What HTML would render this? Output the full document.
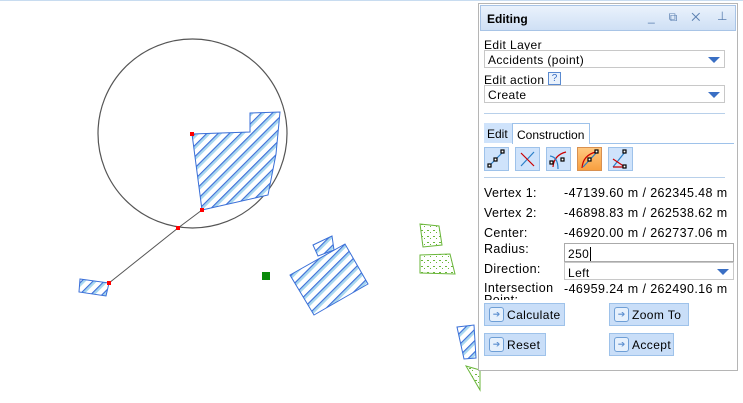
<!DOCTYPE html><html><head><style>
body{margin:0;width:743px;height:403px;overflow:hidden;background:#fff;font-family:"Liberation Sans",sans-serif;font-size:12px;letter-spacing:.4px;color:#000;position:relative}
.a{position:absolute}
.sel{position:absolute;background:#fff;border:1px solid #c8c8c8;box-sizing:border-box;padding:2px 0 0 3px;font-size:12px}
.dd:after{content:"";position:absolute;right:4px;top:6px;border-left:6px solid transparent;border-right:6px solid transparent;border-top:6px solid #3a6fc4}
.tb{position:absolute;top:147px;width:25px;height:24px;background:#cfe3fb;border:1px solid #9ec2ea;box-sizing:border-box}
.btn{position:absolute;height:23px;background:#c9def8;border:1px solid #9ec2ea;box-sizing:border-box;font-size:12px;padding:4px 0 0 22px}
.btn:before{content:"➔";position:absolute;left:4px;top:3px;width:13px;height:13px;border:1px solid #6f9fd6;border-radius:3px;background:#e6f0fc;color:#5c8fd0;font-size:9px;line-height:13px;text-align:center;letter-spacing:0}
.v{font-size:12.5px}
</style></head><body>
<svg class="a" style="left:0;top:0" width="743" height="403">
<defs><pattern id="h" width="8" height="8" patternUnits="userSpaceOnUse" patternTransform="rotate(45)"><rect width="8" height="8" fill="#fff"/><rect width="1.3" height="8" fill="#3a6fd8"/><rect x="1.3" width="2.2" height="8" fill="#a8d8f0"/></pattern>
<pattern id="g" width="6" height="6" patternUnits="userSpaceOnUse"><rect width="6" height="6" fill="#fff"/><rect x="1" y="2" width="2" height="1" fill="#6ab63a"/><rect x="4" y="4" width="1" height="1" fill="#6ab63a"/></pattern></defs>
<line x1="0" y1="0.5" x2="743" y2="0.5" stroke="#c8dcf0"/>
<circle cx="192.5" cy="133.5" r="94.5" fill="none" stroke="#555" stroke-width="1.2"/>
<g stroke="#3a6fd8" stroke-width="1" fill="url(#h)">
<polygon points="192,134 250,132 250,113 280,112 276,154 268,195 202,210"/>
<polygon points="80,279 109,283 106,296 79,292"/>
<polygon points="313,245 332,236 334,250 318,256"/>
<polygon points="290,275 345,244 368,284 314,315"/>
<polygon points="457,327 474,325 476,358 464,359"/></g>
<g stroke="#6ab63a" fill="url(#g)"><polygon points="420,224 439,226 442,245 423,247"/><polygon points="420,255 450,254 455,274 420,273"/><polygon points="466,366 480,370 480,390"/></g>
<polyline points="109,283 178,228 202,210" fill="none" stroke="#555"/>
<g fill="#f00"><rect x="190" y="132" width="4" height="4"/><rect x="200" y="208" width="4" height="4"/><rect x="176" y="226" width="4" height="4"/><rect x="107" y="281" width="4" height="4"/></g>
<rect x="262" y="272" width="8" height="8" fill="#0a8a0a"/>
</svg>
<div class="a" style="left:478px;top:3px;width:260px;height:368px;border:1px solid #b5b5b5;background:#fff;box-sizing:border-box"></div>
<div class="a" style="left:480px;top:5px;width:256px;height:26px;background:linear-gradient(#eaf2fc,#cfe0f5);border:1px solid #a8c4e6;box-sizing:border-box;font-weight:bold;font-size:12px;letter-spacing:0;padding:6px 0 0 6px">Editing
<span class="a" style="left:167px;top:4px;color:#5a7fb0;font-weight:normal;letter-spacing:14px">_⧉✕</span><span class="a" style="left:236px;top:3px;color:#5a7fb0;font-weight:normal">⊥</span></div>
<div class="a" style="left:484px;top:38px">Edit Layer</div>
<div class="sel dd" style="left:484px;top:50px;width:241px;height:18px">Accidents (point)</div>
<div class="a" style="left:484px;top:73px">Edit action</div>
<div class="a" style="left:548px;top:72px;width:11px;height:11px;border:1px solid #5a8ad0;color:#3a6fc4;font-size:10px;line-height:11px;text-align:center;background:#eaf2fc;letter-spacing:0">?</div>
<div class="sel dd" style="left:484px;top:85px;width:241px;height:18px">Create</div>
<div class="a" style="left:484px;top:113px;width:241px;height:1px;background:#b8d0ea"></div>
<div class="a" style="left:484px;top:123px;width:28px;height:20px;background:#cfe3fb;padding:4px 0 0 3px;box-sizing:border-box;letter-spacing:0">Edit</div>
<div class="a" style="left:512px;top:123px;width:78px;height:21px;background:#fff;border:1px solid #9ec2ea;border-bottom:none;box-sizing:border-box;padding:4px 0 0 4px;letter-spacing:0">Construction</div>
<div class="a" style="left:590px;top:143px;width:144px;height:1px;background:#9ec2ea"></div>
<div class="tb" style="left:484px"></div><div class="tb" style="left:515px"></div><div class="tb" style="left:546px"></div>
<div class="tb" style="left:577px;background:linear-gradient(#ffc880,#f8a040);border-color:#d89050"></div><div class="tb" style="left:608px"></div>
<svg class="a" style="left:484px;top:147px" width="160" height="24" fill="none" stroke-width="1.2">
<line x1="5" y1="19" x2="19" y2="5" stroke="#2a7fc8"/><rect x="4" y="17" width="3" height="3" fill="#fff" stroke="#000"/><rect x="10" y="11" width="3" height="3" fill="#fff" stroke="#000"/><rect x="17" y="3" width="3" height="3" fill="#fff" stroke="#000"/>
<line x1="37" y1="19" x2="50" y2="5" stroke="#2a7fc8"/><line x1="37" y1="6" x2="50" y2="19" stroke="#c00"/>
<path d="M69 20 Q70 8 82 5" stroke="#c00"/><path d="M66 9 Q74 10 74 22" stroke="#2a7fc8"/><rect x="66" y="14" width="3" height="3" fill="#fff" stroke="#000"/><rect x="77" y="11" width="3" height="3" fill="#fff" stroke="#000"/>
<path d="M98 21 Q99 8 112 5" stroke="#c00"/><line x1="99" y1="20" x2="113" y2="5" stroke="#2a7fc8"/><rect x="104" y="11" width="3" height="3" fill="#fff" stroke="#000"/><rect x="111" y="3" width="3" height="3" fill="#fff" stroke="#000"/>
<line x1="129" y1="20" x2="141" y2="5" stroke="#2a7fc8"/><polyline points="129,12 141,20 129,20" stroke="#c00"/><rect x="139" y="3" width="3" height="3" fill="#fff" stroke="#000"/><rect x="139" y="18" width="3" height="3" fill="#fff" stroke="#000"/></svg>
<div class="a" style="left:484px;top:177px;width:241px;height:1px;background:#b8d0ea"></div>
<div class="a v" style="left:484px;top:183px;line-height:20px">Vertex 1:<br>Vertex 2:<br>Center:</div>
<div class="a v" style="left:564px;top:183px;line-height:20px">-47139.60 m / 262345.48 m<br>-46898.83 m / 262538.62 m<br>-46920.00 m / 262737.06 m</div>
<div class="a v" style="left:484px;top:242px">Radius:</div>
<div class="sel" style="left:564px;top:243px;width:170px;height:19px;border-color:#aaa;padding-top:3px">250<span style="border-left:1px solid #000;margin-left:1px"></span></div>
<div class="a v" style="left:484px;top:262px">Direction:</div>
<div class="sel dd" style="left:564px;top:262px;width:170px;height:18px;padding-top:3px">Left</div>
<div class="a v" style="left:484px;top:282px;width:80px;height:18px;overflow:hidden;line-height:12px">Intersection Point:</div>
<div class="a v" style="left:564px;top:282px">-46959.24 m / 262490.16 m</div>
<div class="btn" style="left:484px;top:303px;width:81px">Calculate</div>
<div class="btn" style="left:609px;top:303px;width:80px">Zoom To</div>
<div class="btn" style="left:484px;top:333px;width:62px">Reset</div>
<div class="btn" style="left:609px;top:333px;width:65px">Accept</div>
</body></html>
